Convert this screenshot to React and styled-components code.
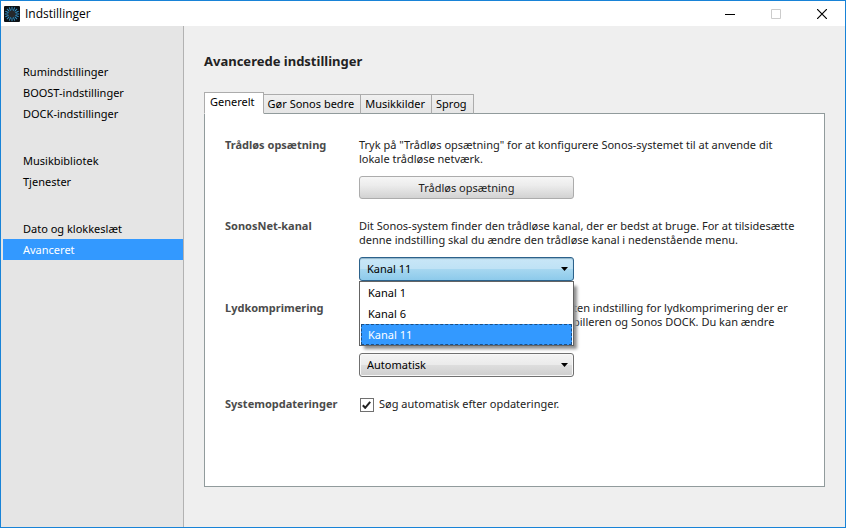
import React, { useState } from "react";
import styled, { createGlobalStyle, css } from "styled-components";

const GlobalStyle = createGlobalStyle`
  *, *::before, *::after { box-sizing: border-box; }
  body { margin: 0; }
  body, button, select, input {
    font-family: "Noto Sans", "Open Sans", sans-serif;
    font-size: 11px;
    line-height: 14px;
    color: #000;
  }
  ul { list-style: none; margin: 0; padding: 0; }
`;

const Window = styled.div`
  display: flex;
  flex-direction: column;
  min-height: 100vh;
  border: 1px solid #1883d7;
  background: #efefef;
`;

const TitleBar = styled.header`
  display: flex;
  align-items: center;
  gap: 5px;
  height: 25px;
  padding: 0 12px 0 3px;
  background: #fff;
`;

const WindowTitle = styled.span`
  flex: 1;
  font-family: "Open Sans", "Noto Sans", sans-serif;
  font-size: 12px;
`;

const WindowControls = styled.div`
  display: flex;
  gap: 24px;
`;

const WindowButton = styled.button`
  display: grid;
  place-items: center;
  width: 22px;
  height: 22px;
  padding: 0;
  border: 0;
  background: none;
`;

const Body = styled.div`
  display: flex;
  flex: 1;
`;

const Sidebar = styled.nav`
  display: flex;
  flex-direction: column;
  gap: 26px;
  flex: 0 0 183px;
  padding: 35px 0 0 2px;
  border-right: 1px solid #b2b2b2;
  background: #e5e5e5;
`;

const NavLink = styled.a`
  display: block;
  padding: 0 20px;
  line-height: 21px;
  text-decoration: none;
  color: ${(p) => (p.$active ? "#fff" : "#000")};
  background: ${(p) => (p.$active ? "#3399ff" : "transparent")};
`;

const Main = styled.main`
  display: flex;
  flex-direction: column;
  flex: 1;
  min-width: 0;
  padding: 26px 20px 40px;
`;

const Heading = styled.h1`
  margin: 0 0 21px;
  font-size: 13px;
  line-height: 19px;
  color: #222;
`;

const TabList = styled.div`
  display: flex;
  align-items: flex-end;
  position: relative;
  z-index: 1;
  margin-bottom: -1px;
`;

const Tab = styled.button`
  height: 20px;
  padding: 0 6px 0 4px;
  border: 1px solid #acacac;
  border-left-width: ${(p) => (p.$first ? "1px" : "0")};
  border-bottom-color: #919b9c;
  background: linear-gradient(#f0f0f0, #e5e5e5);
  white-space: nowrap;
  ${(p) =>
    p.$active &&
    css`
      height: 22px;
      padding: 0 8px 2px 5px;
      border-bottom-color: #fff;
      background: #fff;
    `}
`;

const Panel = styled.section`
  flex: 1;
  padding: 24px 20px;
  border: 1px solid #919b9c;
  background: #fff;
`;

const SettingRow = styled.div`
  display: grid;
  grid-template-columns: 134px minmax(0, 1fr);
  margin-bottom: 20px;
`;

const SettingName = styled.div`
  font-weight: bold;
  color: #4b4b4b;
`;

const Description = styled.p`
  margin: 0 0 10px;
  color: #222;
  ${(p) =>
    p.$besideMenu &&
    css`
      min-height: 42px;
      padding-left: 214px;
    `}
`;

const PushButton = styled.button`
  display: block;
  width: 215px;
  height: 23px;
  padding: 0;
  border: 1px solid #acacac;
  border-radius: 3px;
  background: linear-gradient(#f6f6f6, #ececec 40%, #d2d2d2);
  color: #222;
`;

const ComboBox = styled.div`
  display: grid;
  align-items: center;
  position: relative;
  width: 215px;
`;

const Select = styled.select`
  grid-area: 1 / 1;
  appearance: none;
  width: 100%;
  height: 24px;
  padding: 0 24px 0 7px;
  border: 1px solid ${(p) => (p.$open ? "#2c628b" : "#707070")};
  border-radius: 3px;
  outline: 0;
  background: ${(p) =>
    p.$open
      ? "linear-gradient(#c9e7f7, #bfe2f5 48%, #a6d7f0 52%, #8dcaeb)"
      : "linear-gradient(#f4f4f4, #ebebeb 48%, #dddddd 52%, #cfcfcf)"};
  box-shadow: ${(p) => (p.$open ? "inset 0 1px 1px #8fb3c8" : "inset 0 0 0 1px #f8f8f8")};
`;

const Arrow = styled.svg`
  grid-area: 1 / 1;
  justify-self: end;
  margin-right: 6px;
  pointer-events: none;
`;

const Menu = styled.ul`
  position: absolute;
  top: 100%;
  left: 0;
  right: 0;
  z-index: 2;
  padding: 0 1px;
  border: 1px solid #646464;
  background: #fff;
  box-shadow: 4px 4px 3px -1px #909090;
`;

const MenuItem = styled.li`
  height: 21px;
  padding: 0 6px;
  border: 1px ${(p) => (p.$selected ? "dashed #1b4f86" : "solid transparent")};
  line-height: 19px;
  color: ${(p) => (p.$selected ? "#fff" : "#000")};
  background: ${(p) => (p.$selected ? "#3399ff" : "transparent")};
`;

const CheckLabel = styled.label`
  display: flex;
  align-items: flex-start;
  gap: 5px;
  color: #222;
`;

const CheckBox = styled.span`
  display: grid;
  place-items: center;
  width: 15px;
  height: 15px;
`;

const CheckInput = styled.input`
  grid-area: 1 / 1;
  appearance: none;
  width: 14px;
  height: 14px;
  margin: 0;
  border: 1px solid #707070;
  background: #fff;
  &:not(:checked) + svg { visibility: hidden; }
`;

const CheckMark = styled.svg`
  grid-area: 1 / 1;
  pointer-events: none;
`;

const navGroups = [
  ["Rumindstillinger", "BOOST-indstillinger", "DOCK-indstillinger"],
  ["Musikbibliotek", "Tjenester"],
  ["Dato og klokkeslæt", "Avanceret"],
];
const tabs = ["Generelt", "Gør Sonos bedre", "Musikkilder", "Sprog"];
const channels = ["Kanal 1", "Kanal 6", "Kanal 11"];
const rays = Array.from({ length: 16 }, (_, i) => i * 22.5);

function AppIcon() {
  return (
    <svg width="16" height="16" viewBox="0 0 16 16" aria-hidden="true">
      <rect width="16" height="16" rx="1" fill="#0c1116" />
      {rays.map((a) => (
        <path key={a} d="M8 .8v3.8" stroke="#3593c8" strokeWidth="1" transform={`rotate(${a} 8 8)`} />
      ))}
      <circle cx="8" cy="8" r="3.6" fill="#25282b" />
    </svg>
  );
}

function DropArrow() {
  return (
    <Arrow width="7" height="4" viewBox="0 0 7 4" aria-hidden="true">
      <path d="M0 0h7L3.5 4z" fill="#000" />
    </Arrow>
  );
}

export default function App() {
  const [channel, setChannel] = useState("Kanal 11");

  return (
    <>
      <GlobalStyle />
      <Window>
        <TitleBar>
          <AppIcon />
          <WindowTitle>Indstillinger</WindowTitle>
          <WindowControls>
            <WindowButton aria-label="Minimer">
              <svg width="10" height="10"><path d="M0 5.5h10" stroke="#000" /></svg>
            </WindowButton>
            <WindowButton aria-label="Maksimer" disabled>
              <svg width="10" height="10"><path d="M.5.5h9v9h-9z" fill="none" stroke="#ccc" /></svg>
            </WindowButton>
            <WindowButton aria-label="Luk">
              <svg width="10" height="10"><path d="M0 0l10 10M10 0L0 10" stroke="#000" strokeWidth="1.2" /></svg>
            </WindowButton>
          </WindowControls>
        </TitleBar>
        <Body>
          <Sidebar>
            {navGroups.map((group) => (
              <ul key={group[0]}>
                {group.map((item) => (
                  <li key={item}>
                    <NavLink href="#" $active={item === "Avanceret"}>{item}</NavLink>
                  </li>
                ))}
              </ul>
            ))}
          </Sidebar>
          <Main>
            <Heading>Avancerede indstillinger</Heading>
            <TabList role="tablist">
              {tabs.map((tab, i) => (
                <Tab key={tab} role="tab" aria-selected={i === 0} $first={i === 0} $active={i === 0}>
                  {tab}
                </Tab>
              ))}
            </TabList>
            <Panel role="tabpanel">
              <SettingRow>
                <SettingName>Trådløs opsætning</SettingName>
                <div>
                  <Description>
                    Tryk på "Trådløs opsætning" for at konfigurere Sonos-systemet til at anvende dit
                    lokale trådløse netværk.
                  </Description>
                  <PushButton>Trådløs opsætning</PushButton>
                </div>
              </SettingRow>
              <SettingRow>
                <SettingName as="label" htmlFor="channel">SonosNet-kanal</SettingName>
                <div>
                  <Description>
                    Dit Sonos-system finder den trådløse kanal, der er bedst at bruge. For at tilsidesætte
                    denne indstilling skal du ændre den trådløse kanal i nedenstående menu.
                  </Description>
                  <ComboBox>
                    <Select
                      id="channel"
                      $open
                      value={channel}
                      onChange={(e) => setChannel(e.target.value)}
                    >
                      {channels.map((c) => <option key={c}>{c}</option>)}
                    </Select>
                    <DropArrow />
                    <Menu role="listbox" aria-label="SonosNet-kanal">
                      {channels.map((c) => (
                        <MenuItem
                          key={c}
                          role="option"
                          aria-selected={c === channel}
                          $selected={c === channel}
                          onClick={() => setChannel(c)}
                        >
                          {c}
                        </MenuItem>
                      ))}
                    </Menu>
                  </ComboBox>
                </div>
              </SettingRow>
              <SettingRow>
                <SettingName as="label" htmlFor="compression">Lydkomprimering</SettingName>
                <div>
                  <Description $besideMenu>
                    ten indstilling for lydkomprimering der er
                    <br />
                    pilleren og Sonos DOCK. Du kan ændre
                  </Description>
                  <ComboBox>
                    <Select id="compression" defaultValue="Automatisk">
                      <option>Automatisk</option>
                    </Select>
                    <DropArrow />
                  </ComboBox>
                </div>
              </SettingRow>
              <SettingRow>
                <SettingName>Systemopdateringer</SettingName>
                <CheckLabel>
                  <CheckBox>
                    <CheckInput type="checkbox" defaultChecked />
                    <CheckMark width="9" height="8" viewBox="0 0 9 8" aria-hidden="true">
                      <path d="M.8 4.2l2.4 2.6L8.2.8" fill="none" stroke="#222" strokeWidth="2" />
                    </CheckMark>
                  </CheckBox>
                  Søg automatisk efter opdateringer.
                </CheckLabel>
              </SettingRow>
            </Panel>
          </Main>
        </Body>
      </Window>
    </>
  );
}
